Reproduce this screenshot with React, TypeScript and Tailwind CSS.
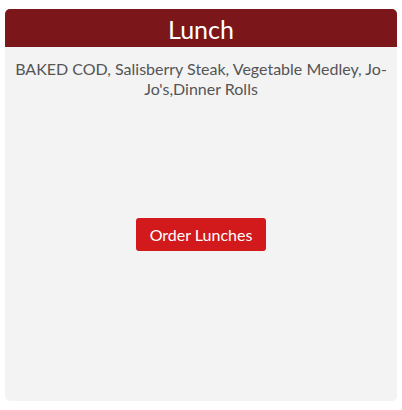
export default function App() {
  return (
    <div className="w-[402px] h-[410px] bg-white pt-[9px] px-[5px]" style={{ fontFamily: '"Lato", "Noto Sans", sans-serif' }}>
      <div className="w-[392px] h-[392px] rounded-[5px] bg-[#f3f3f3] overflow-hidden flex flex-col">
        <div className="h-[38px] bg-[#7b171a] text-white text-[25px] leading-[40px] text-center">Lunch</div>
        <div className="px-[10px] pt-[12px] text-[16px] leading-[20px] text-[#555555] text-center">
          BAKED COD, Salisberry Steak, Vegetable Medley, Jo-Jo's,Dinner Rolls
        </div>
        <div className="flex justify-center mt-[119px]">
          <button className="w-[130px] h-[33px] rounded-[3px] bg-[#d2191c] text-white text-[16px]">Order Lunches</button>
        </div>
      </div>
    </div>
  );
}
